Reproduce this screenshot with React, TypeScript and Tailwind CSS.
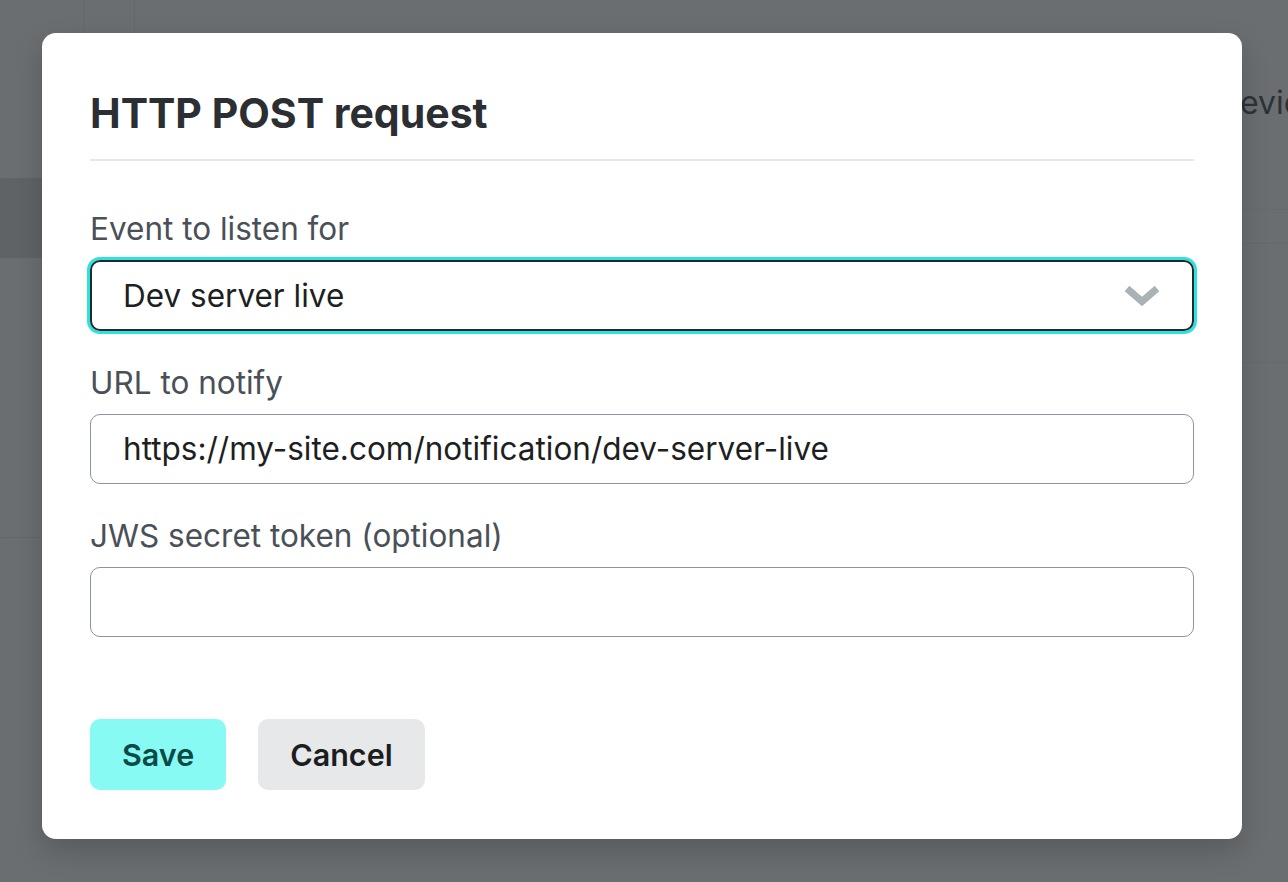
const FONT = { fontFamily: 'Inter, "Noto Sans", "Liberation Sans", sans-serif' };

function Field({ label, children }: { label: string; children: React.ReactNode }) {
  return (
    <div className="flex flex-col">
      <label className="text-[31.5px] leading-[40px] text-[#4a5058] mb-[11px]">{label}</label>
      {children}
    </div>
  );
}

function Chevron() {
  return (
    <svg width="36" height="23" viewBox="0 0 36 23" fill="none" className="text-[#abb2b5]">
      <path d="M3 4.5 L18 17.5 L33 4.5" stroke="currentColor" strokeWidth="7" strokeLinejoin="miter" />
    </svg>
  );
}

function Background() {
  // the page behind the dimmed overlay
  return (
    <div className="flex flex-col h-full">
      <div className="flex h-[178px]">
        <div className="w-[85px] shrink-0 border-r border-[#65686b]" />
        <div className="w-[50px] shrink-0 border-r border-[#65686b]" />
        <div className="flex-1 min-w-0 overflow-hidden pl-[1073px] pt-[83px]">
          <span className="text-[32px] leading-[40px] text-[#2e3236] whitespace-nowrap">Preview</span>
        </div>
      </div>
      <div className="flex h-[80px]">
        <div className="w-[42px] shrink-0 bg-[#606366]" />
        <div className="flex-1 flex flex-col">
          <div className="h-[32px] border-b border-[#676a6d]" />
          <div className="h-[34px] border-b border-[#676a6d]" />
        </div>
      </div>
      <div className="flex h-[280px]">
        <div className="w-[42px] shrink-0 border-b border-[#63666a]" />
        <div className="flex-1 flex flex-col">
          <div className="h-[105px] border-b border-[#676a6d]" />
        </div>
      </div>
      <div className="flex-1" />
    </div>
  );
}

export default function App() {
  return (
    <div className="relative h-[882px] w-full overflow-hidden bg-[#6b6e71]" style={FONT}>
      <Background />
      <div className="absolute left-[42px] top-[33px] w-[1200px] rounded-[14px] bg-white px-[48px] pt-[54px] pb-[49px] shadow-[0_12px_28px_rgba(0,0,0,0.18)]">
        <h2 className="text-[41px] leading-[52px] font-bold text-[#2b2e32] pb-[20px] border-b-2 border-[#e6e7e8]">
          HTTP POST request
        </h2>

        <div className="mt-[48px] flex flex-col gap-[32px]">
          <Field label="Event to listen for">
            <div className="flex items-center justify-between h-[71px] rounded-[10px] border-2 border-[#25282b] ring-[3px] ring-[#2ee3de] pl-[31px] pr-[32px]">
              <span className="text-[31.5px] text-[#1d1f22]">Dev server live</span>
              <Chevron />
            </div>
          </Field>
          <Field label="URL to notify">
            <div className="flex items-center h-[70px] rounded-[10px] border-[1.5px] border-[#8b95a0] pl-[32px]">
              <span className="text-[31.5px] text-[#1d1f22]">https://my-site.com/notification/dev-server-live</span>
            </div>
          </Field>
          <Field label="JWS secret token (optional)">
            <div className="h-[70px] rounded-[10px] border-[1.5px] border-[#8b95a0]" />
          </Field>
        </div>

        <div className="mt-[82px] flex gap-[32px]">
          <button className="h-[71px] px-[32px] rounded-[10px] bg-[#88faf4] text-[30.5px] font-semibold text-[#0c4a46]">
            Save
          </button>
          <button className="h-[71px] px-[32px] rounded-[10px] bg-[#e7e8ea] text-[30.5px] font-semibold text-[#1c1d1f]">
            Cancel
          </button>
        </div>
      </div>
    </div>
  );
}
